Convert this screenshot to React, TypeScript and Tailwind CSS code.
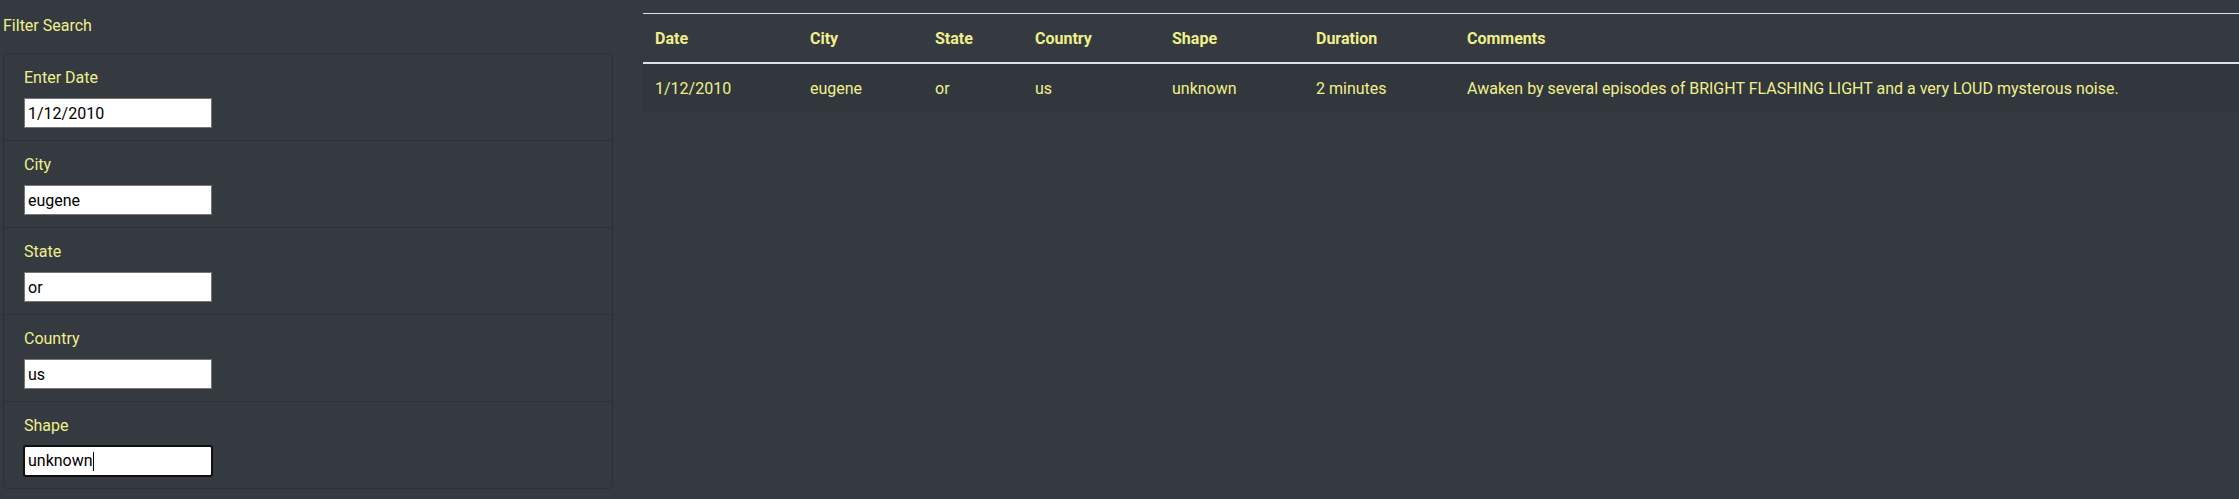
import React from 'react';

const fields = [
  { label: 'Enter Date', value: '1/12/2010' },
  { label: 'City', value: 'eugene' },
  { label: 'State', value: 'or' },
  { label: 'Country', value: 'us' },
  { label: 'Shape', value: 'unknown', focused: true },
];

const columns = [
  { name: 'Date', width: 'w-[155px]' },
  { name: 'City', width: 'w-[125px]' },
  { name: 'State', width: 'w-[100px]' },
  { name: 'Country', width: 'w-[137px]' },
  { name: 'Shape', width: 'w-[144px]' },
  { name: 'Duration', width: 'w-[151px]' },
  { name: 'Comments', width: '' },
];

const rows = [
  ['1/12/2010', 'eugene', 'or', 'us', 'unknown', '2 minutes', 'Awaken by several episodes of BRIGHT FLASHING LIGHT and a very LOUD mysterous noise.'],
];

export default function App() {
  return (
    <div className="min-h-screen bg-[#343a40] text-[#f0ef8c] text-[16px] leading-6 font-['Roboto',sans-serif]">
      <div className="flex items-start">
        {/* filter panel */}
        <div className="w-[610px] ml-[3px] shrink-0">
          <h5 className="pt-[14px] mb-[15px]">Filter Search</h5>
          <ul className="rounded border border-black/[0.14]">
            {fields.map((f, i) => (
              <li
                key={f.label}
                className={`flex flex-col items-start px-5 pt-3 pb-3 ${i > 0 ? 'border-t border-black/[0.14]' : ''}`}
              >
                <label className="mb-2 leading-6">{f.label}</label>
                {f.focused ? (
                  <div className="w-[190px] h-[32px] -mx-px -my-px px-[3px] bg-white text-black rounded-[3px] border-2 border-[#101010] flex items-center">
                    <span>{f.value}</span>
                    <span className="w-px h-[19px] bg-black" />
                  </div>
                ) : (
                  <input
                    readOnly
                    value={f.value}
                    className="w-[188px] h-[30px] px-[3px] bg-white text-black border border-[#767676] outline-none"
                  />
                )}
              </li>
            ))}
          </ul>
        </div>

        {/* results */}
        <div className="ml-[30px] mt-[13px] flex-1">
          <table className="w-full border-collapse">
            <thead>
              <tr>
                {columns.map((c) => (
                  <th
                    key={c.name}
                    className={`${c.width} px-3 pt-[13px] pb-[11px] text-left font-bold border-t border-b-2 border-[#dee2e6]`}
                  >
                    {c.name}
                  </th>
                ))}
              </tr>
            </thead>
            <tbody>
              {rows.map((r, i) => (
                <tr key={i} className="bg-black/[0.05]">
                  {r.map((cell, j) => (
                    <td key={j} className="px-3 pt-[13px] pb-[11px] align-top">
                      {cell}
                    </td>
                  ))}
                </tr>
              ))}
            </tbody>
          </table>
        </div>
      </div>
    </div>
  );
}
